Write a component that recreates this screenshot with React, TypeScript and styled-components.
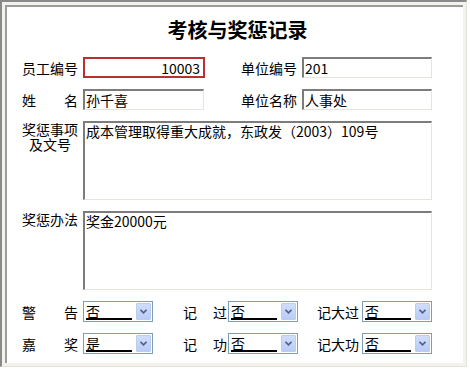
import styled, { createGlobalStyle } from "styled-components";

const GlobalStyle = createGlobalStyle`
  body {
    margin: 0;
    background: #fff;
    font-family: "Noto Sans CJK SC", "Liberation Sans", sans-serif;
    color: #000;
  }
`;

const Frame = styled.div`
  width: 467px;
  height: 367px;
  box-sizing: border-box;
  border-style: solid;
  border-width: 2px 1px 1px 2px;
  border-color: #8a8a8a #e4e2d8 #e4e2d8 #8a8a8a;
  padding: 3px;
  background: #f3f2ec;
`;

const Panel = styled.div`
  height: 100%;
  box-sizing: border-box;
  border-style: solid;
  border-width: 2px 0 0 2px;
  border-color: #9c9c9c;
  background: #fff;
  padding: 11px 10px 0 15px;
`;

const Title = styled.h1`
  margin: 0 0 15px;
  font-size: 20px;
  line-height: 24px;
  font-weight: bold;
  text-align: center;
`;

const Form = styled.div`
  display: flex;
  flex-direction: column;
  gap: 11px;
`;

const Row = styled.div<{ $top?: boolean }>`
  display: flex;
  align-items: ${(p) => (p.$top ? "flex-start" : "center")};
`;

const Label = styled.div<{ $w?: number; $ml?: number; $gap?: number }>`
  flex-shrink: 0;
  width: ${(p) => p.$w ?? 56}px;
  margin-left: ${(p) => p.$ml ?? 0}px;
  margin-right: ${(p) => p.$gap ?? 5}px;
  font-size: 14px;
  line-height: 16px;
  white-space: nowrap;
`;

const Spread = styled(Label)`
  display: flex;
  justify-content: space-between;
`;

const BlockLabel = styled(Label)`
  padding-top: 1px;
  line-height: 15px;
  text-align: center;
`;

const Field = styled.input<{ $w: number; $warn?: boolean; $right?: boolean }>`
  width: ${(p) => p.$w}px;
  height: 21px;
  box-sizing: border-box;
  margin: 0;
  padding: 0 ${(p) => (p.$right ? 3 : 1)}px 0 1px;
  font-family: inherit;
  font-size: 14px;
  color: #000;
  background: #fff;
  text-align: ${(p) => (p.$right ? "right" : "left")};
  outline: none;
  border-style: solid;
  border-width: ${(p) => (p.$warn ? "2px" : "2px 1px 1px 2px")};
  border-color: ${(p) =>
    p.$warn ? "#b8312f" : "#7c7c7c #e6e4dc #e6e4dc #7c7c7c"};
`;

const Memo = styled.textarea`
  width: 349px;
  height: 79px;
  box-sizing: border-box;
  margin: 0;
  padding: 0 1px;
  font-family: inherit;
  font-size: 14px;
  line-height: 17px;
  color: #000;
  resize: none;
  overflow: hidden;
  outline: none;
  border-style: solid;
  border-width: 2px 1px 1px 2px;
  border-color: #7c7c7c #e6e4dc #e6e4dc #7c7c7c;
`;

const Combo = styled.div`
  flex-shrink: 0;
  width: 70px;
  height: 21px;
  box-sizing: border-box;
  border: 1px solid #7f9db9;
  background: #fff;
  display: flex;
  align-items: center;
  padding: 0 1px 0 2px;
`;

const ComboValue = styled.span`
  flex: 1;
  font-size: 14px;
  line-height: 14px;
  border-bottom: 2px solid #000;
  margin-right: 4px;
`;

const ComboButton = styled.span`
  width: 15px;
  height: 17px;
  box-sizing: border-box;
  border: 1px solid #bccbee;
  border-radius: 1px;
  background: linear-gradient(#d0ddfc, #b9cbf7);
  display: flex;
  align-items: center;
  justify-content: center;
`;

const Select = ({ value }: { value: string }) => (
  <Combo>
    <ComboValue>{value}</ComboValue>
    <ComboButton>
      <svg width="7" height="5" viewBox="0 0 7 5">
        <path d="M0.5 0.8 L3.5 3.8 L6.5 0.8" fill="none" stroke="#4d6185" strokeWidth="1.6" />
      </svg>
    </ComboButton>
  </Combo>
);

const Wide = ({ text, w, ml, gap }: { text: string; w?: number; ml?: number; gap?: number }) => (
  <Spread $w={w} $ml={ml} $gap={gap}>
    {text.split("").map((c, i) => (
      <span key={i}>{c}</span>
    ))}
  </Spread>
);

const App = () => {
  return (
    <>
      <GlobalStyle />
      <Frame>
        <Panel>
          <Title>考核与奖惩记录</Title>
          <Form>
            <Row>
              <Label>员工编号</Label>
              <Field $w={122} $warn $right readOnly defaultValue="10003" />
              <Label $ml={36}>单位编号</Label>
              <Field $w={130} readOnly defaultValue="201" />
            </Row>
            <Row>
              <Wide text="姓名" />
              <Field $w={121} readOnly defaultValue="孙千喜" />
              <Label $ml={37}>单位名称</Label>
              <Field $w={130} readOnly defaultValue="人事处" />
            </Row>
            <Row $top>
              <BlockLabel>
                奖惩事项
                <br />
                及文号
              </BlockLabel>
              <Memo readOnly defaultValue="成本管理取得重大成就，东政发（2003）109号" />
            </Row>
            <Row $top>
              <BlockLabel>奖惩办法</BlockLabel>
              <Memo readOnly defaultValue="奖金20000元" />
            </Row>
            <Row>
              <Wide text="警告" />
              <Select value="否" />
              <Wide text="记过" w={44} ml={30} gap={1} />
              <Select value="否" />
              <Label $w={42} $ml={19} $gap={3}>记大过</Label>
              <Select value="否" />
            </Row>
            <Row>
              <Wide text="嘉奖" />
              <Select value="是" />
              <Wide text="记功" w={44} ml={30} gap={1} />
              <Select value="否" />
              <Label $w={42} $ml={19} $gap={3}>记大功</Label>
              <Select value="否" />
            </Row>
          </Form>
        </Panel>
      </Frame>
    </>
  );
};

export default App;
